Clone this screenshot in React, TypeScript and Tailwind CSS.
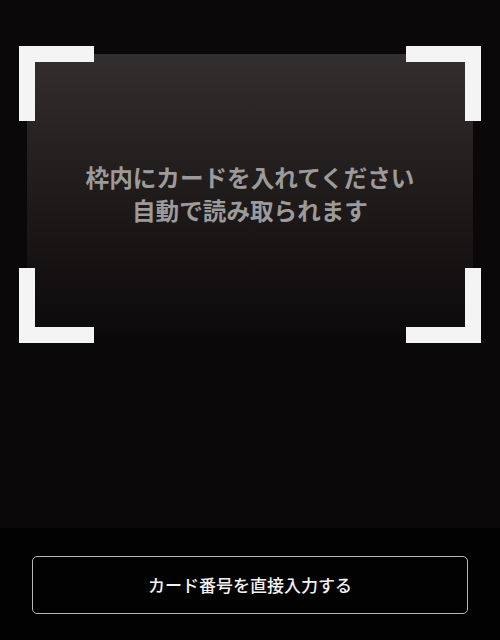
import React from 'react';

const font = { fontFamily: '"Noto Sans CJK JP", "Noto Sans", sans-serif' };

const Corner: React.FC<{ pos: string }> = ({ pos }) => {
  // each corner is two white bars forming an L
  return (
    <div className={`absolute w-[75px] h-[75px] ${pos}`}>
      {pos.includes('top-0') ? (
        <div className="absolute top-0 left-0 w-full h-[16px] bg-[#f4f4f4]" />
      ) : (
        <div className="absolute bottom-0 left-0 w-full h-[16px] bg-[#f4f4f4]" />
      )}
      {pos.includes('left-0') ? (
        <div className="absolute top-0 left-0 w-[16px] h-full bg-[#f4f4f4]" />
      ) : (
        <div className="absolute top-0 right-0 w-[16px] h-full bg-[#f4f4f4]" />
      )}
    </div>
  );
};

const App: React.FC = () => {
  return (
    <div className="w-[500px] h-[640px] flex flex-col bg-black overflow-hidden" style={font}>
      {/* camera preview */}
      <div className="h-[528px] bg-[#0b080a] pt-[46px] px-[19px]">
        <div className="relative h-[297px] p-[8px]">
          <div className="h-full bg-gradient-to-b from-[#332f2f] via-[#1f1b1b] to-[#0d0a0b] flex flex-col items-center justify-center text-[#9c9a9a] text-[23.6px] font-bold leading-[33px] pb-[2px]">
            <p>枠内にカードを入れてください</p>
            <p>自動で読み取られます</p>
          </div>
          <Corner pos="top-0 left-0" />
          <Corner pos="top-0 right-0" />
          <Corner pos="bottom-0 left-0" />
          <Corner pos="bottom-0 right-0" />
        </div>
      </div>

      {/* footer */}
      <div className="flex-1 bg-[#030203] pt-[28px] px-[32px]">
        <button className="w-full h-[58px] border border-[#b8b8b8] rounded-[5px] text-[17px] font-medium text-[#f2f2f2] flex items-center justify-center">
          カード番号を直接入力する
        </button>
      </div>
    </div>
  );
};

export default App;
